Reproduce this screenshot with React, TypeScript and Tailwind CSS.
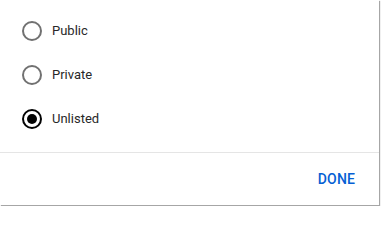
import { useState } from "react";

const options = ["Public", "Private", "Unlisted"];

function Radio({ checked }: { checked: boolean }) {
  return (
    <span
      className={`flex h-5 w-5 items-center justify-center rounded-full border-2 ${
        checked ? "border-[#030303]" : "border-[#717171]"
      }`}
    >
      {checked && <span className="h-[10px] w-[10px] rounded-full bg-[#030303]" />}
    </span>
  );
}

export default function App() {
  const [value, setValue] = useState("Unlisted");

  return (
    <div className="h-[206px] w-[381px] bg-white font-['Roboto',sans-serif]">
      <div className="flex h-[205px] w-[379px] flex-col bg-white shadow-[1px_1px_1px_rgba(0,0,0,0.35)]">
        <div className="flex flex-col pt-[9px] pb-[11px]">
          {options.map((opt) => (
            <button
              key={opt}
              onClick={() => setValue(opt)}
              className="flex h-11 items-center gap-[10px] pl-[22px] text-left"
            >
              <Radio checked={value === opt} />
              <span className="text-[13px] text-[#282828]">{opt}</span>
            </button>
          ))}
        </div>
        <div className="h-px bg-[#e5e5e5]" />
        <div className="flex flex-1 items-center justify-end pr-[24px]">
          <button className="text-[14px] font-medium uppercase tracking-[0.01em] text-[#065fd4]">
            Done
          </button>
        </div>
      </div>
    </div>
  );
}
